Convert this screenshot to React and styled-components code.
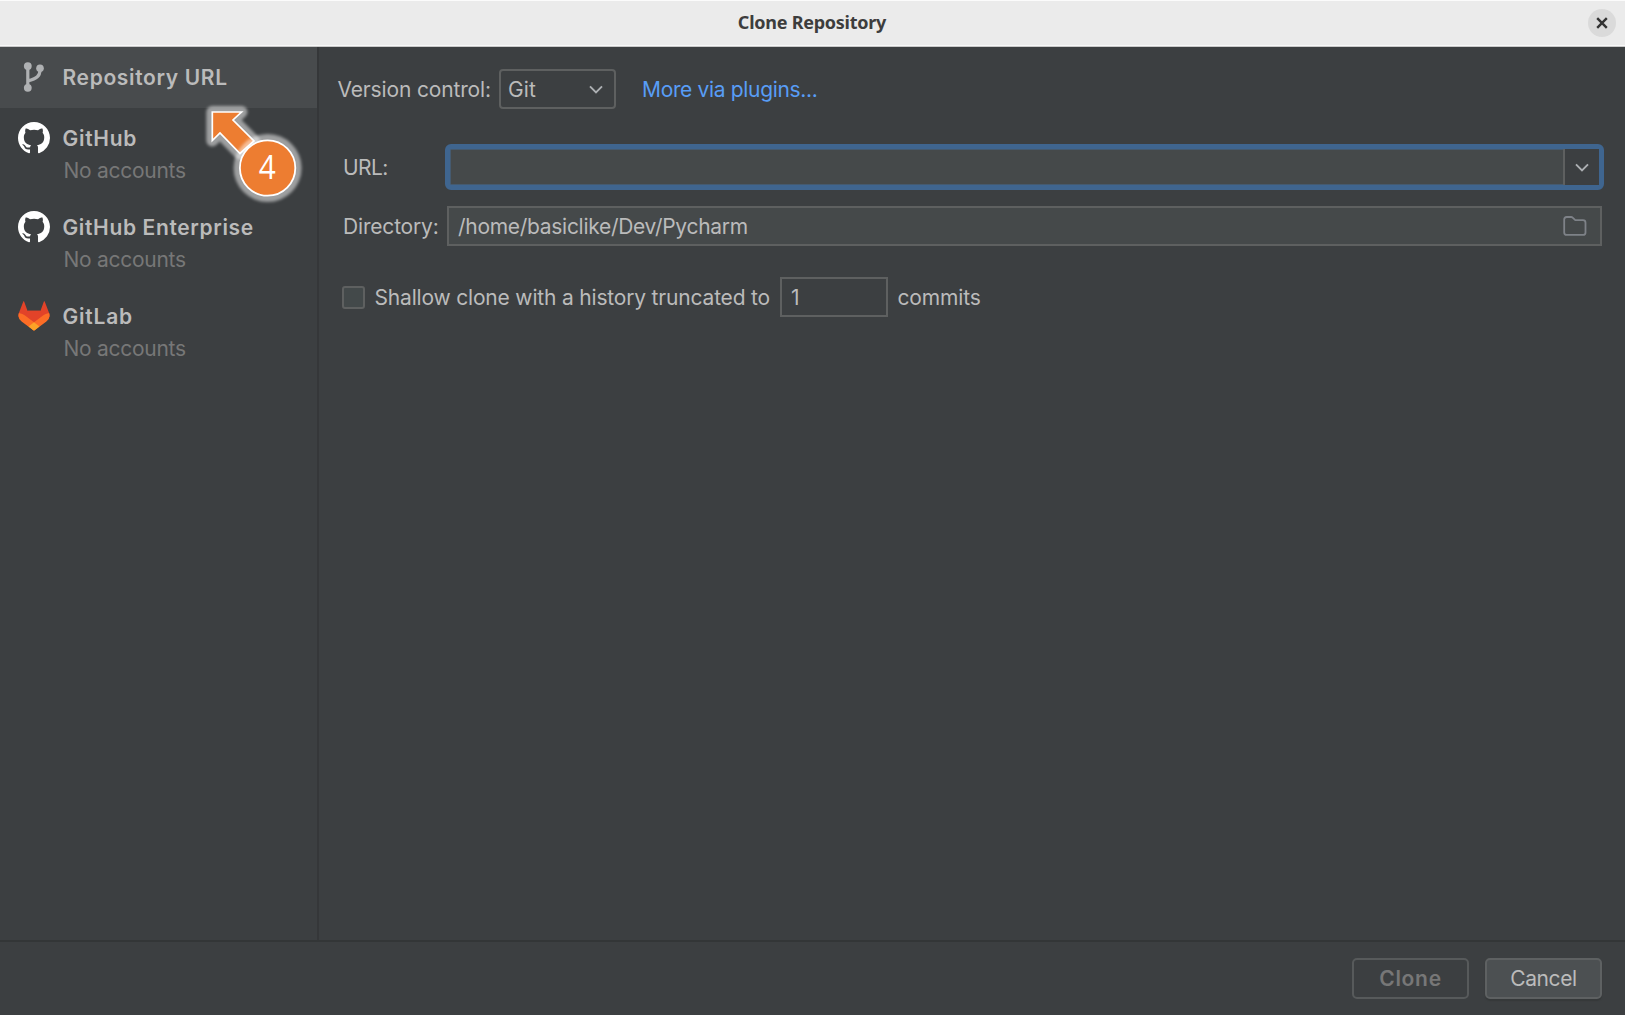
import React from "react";
import styled, { createGlobalStyle } from "styled-components";

const Global = createGlobalStyle`
  * { box-sizing: border-box; }
  body { margin: 0; background: #3c3f41; overflow: hidden; }
`;

const Dialog = styled.div`
  position: relative;
  width: 1625px;
  height: 1015px;
  display: flex;
  flex-direction: column;
  background: #3c3f41;
  color: #bbbbbb;
  font-family: Inter, "Liberation Sans", sans-serif;
  font-size: 21px;
  line-height: 26px;
`;

const TitleBar = styled.header`
  height: 47px;
  flex: none;
  display: grid;
  grid-template-columns: 1fr auto 1fr;
  align-items: center;
  padding: 0 9px;
  background: #ebebeb;
  border-top: 1px solid #fbfbfb;
  border-bottom: 1px solid #c9c9c9;
  box-shadow: inset 0 -1px 0 #f8f8f8;
`;

const Title = styled.h1`
  grid-column: 2;
  margin: 0;
  padding: 0 1px 3px 0;
  font: 700 18px/24px "Noto Sans", "Open Sans", sans-serif;
  letter-spacing: ${(p) => p.$ls}px;
  color: #3d3d3d;
`;

const CloseButton = styled.button`
  justify-self: end;
  width: 28px;
  height: 28px;
  margin-bottom: 1px;
  padding: 0;
  border: 0;
  border-radius: 50%;
  background: #dadada;
  display: grid;
  place-items: center;
`;

const Body = styled.div`
  flex: 1;
  display: flex;
  min-height: 0;
`;

const Sidebar = styled.nav`
  width: 319px;
  flex: none;
  border-right: 2px solid #353739;
`;

const Provider = styled.div`
  display: grid;
  grid-template-columns: 31px 1fr;
  column-gap: 13.5px;
  align-content: start;
  height: ${(p) => (p.$selected ? 61 : 89)}px;
  padding: 14px 0 0 18px;
  background: ${(p) => (p.$selected ? "#484b4d" : "transparent")};
`;

const IconSlot = styled.span`
  height: 34px;
  margin-top: -1px;
  display: grid;
  place-items: center;
`;

const ProviderName = styled.span`
  padding-top: 4px;
  font-weight: 600;
  letter-spacing: ${(p) => p.$ls}px;
  white-space: nowrap;
`;

const Accounts = styled.span`
  grid-column: 2;
  padding: 3px 0 0 1px;
  color: #777777;
  letter-spacing: ${(p) => p.$ls}px;
`;

const Text = styled.span`
  padding-top: 2px;
  letter-spacing: ${(p) => p.$ls || 0}px;
  white-space: nowrap;
`;

const Content = styled.main`
  flex: 1;
  display: flex;
  flex-direction: column;
  padding: 22px 23px 0 18px;
`;

const VersionRow = styled.div`
  height: 40px;
  display: flex;
  align-items: center;
`;

const VersionLabel = styled(Text)`
  width: 162px;
  padding-left: 0.5px;
`;

const Combo = styled.div`
  width: 117px;
  height: 40px;
  display: flex;
  align-items: center;
  justify-content: space-between;
  padding: 0 11px 0 7px;
  border: 2px solid #5e6060;
  border-radius: 4px;
`;

const Link = styled.a`
  margin-left: 26px;
  padding-top: 2px;
  color: #589df6;
  letter-spacing: ${(p) => p.$ls}px;
`;

const Form = styled.div`
  display: grid;
  grid-template-columns: 102px 1fr;
  grid-template-rows: 46px 40px;
  row-gap: 16px;
  margin: 35px -2px 0 6px;
  align-items: center;
`;

const UrlField = styled.div`
  height: 46px;
  display: flex;
  background: #45494a;
  border: 5px solid #3f658f;
  border-radius: 6px;
  box-shadow: inset 0 0 0 0.5px #466d94;
`;

const UrlInput = styled.input`
  flex: 1;
  min-width: 0;
  padding: 0 9px;
  border: 0;
  outline: 0;
  color: inherit;
  font: inherit;
  background: transparent;
`;

const DropButton = styled.button`
  width: 36px;
  padding: 0;
  border: 0;
  border-left: 2px solid #5e6060;
  background: #3c3f41;
  display: grid;
  place-items: center;
`;

const PathField = styled.div`
  height: 40px;
  margin: 0 2px;
  display: flex;
  align-items: center;
  justify-content: space-between;
  padding: 0 13px 0 9px;
  border: 2px solid #5e6060;
  background: #45494a;
`;

const ShallowRow = styled.label`
  display: flex;
  align-items: center;
  height: 40px;
  margin: 31px 0 0 5px;
`;

const Check = styled.span`
  width: 23px;
  height: 23px;
  margin: 1px 9.5px 0 0;
  border: 2px solid #5e6060;
  border-radius: 3px;
  background: #43494a;
`;

const ShallowText = styled(Text)`
  width: 405.5px;
`;

const Depth = styled.span`
  width: 108px;
  height: 40px;
  margin-right: 9.5px;
  padding: 6px 9px;
  border: 2px solid #5e6060;
`;

const Footer = styled.footer`
  height: 75px;
  flex: none;
  display: flex;
  justify-content: flex-end;
  gap: 16px;
  padding: 16px 23px 0;
  border-top: 2px solid #333637;
`;

const Button = styled.button`
  width: 117px;
  height: 41px;
  padding: 0;
  border: 2px solid ${(p) => (p.$muted ? "#575a5b" : "#5e6162")};
  border-radius: 5px;
  background: ${(p) => (p.$muted ? "transparent" : "#4c5052")};
  box-shadow: ${(p) => (p.$muted ? "none" : "0 2px 1px #36393a")};
  color: ${(p) => (p.$muted ? "#777777" : "#bbbbbb")};
  font: inherit;
  font-weight: ${(p) => (p.$muted ? 600 : 400)};
  letter-spacing: ${(p) => p.$ls}px;
`;

const Callout = styled.svg`
  position: absolute;
  left: 195px;
  top: 95px;
`;

const Chevron = () => (
  <svg width="14" height="9" viewBox="0 0 14 9" fill="none" stroke="#adb0b3" strokeWidth="1.9">
    <path d="M1 1.3 7 7.4 13 1.3" />
  </svg>
);

const BranchIcon = () => (
  <svg width="31" height="32" viewBox="0 0 31 32" fill="none" stroke="#afb1b3" strokeWidth="3.2">
    <path d="M9.8 6V26M22 9C22 15 19 17.5 9.8 20" />
    <g fill="#afb1b3" stroke="none">
      <circle cx="9.8" cy="5.1" r="3.9" />
      <circle cx="9.8" cy="26.8" r="3.9" />
      <circle cx="22" cy="7.3" r="3.8" />
    </g>
  </svg>
);

const GitHubIcon = () => (
  <svg width="32" height="32" viewBox="0 0 16 16" fill="#ffffff">
    <path d="M8 0C3.58 0 0 3.58 0 8c0 3.54 2.29 6.53 5.47 7.59.4.07.55-.17.55-.38 0-.19-.01-.82-.01-1.49-2.01.37-2.53-.49-2.69-.94-.09-.23-.48-.94-.82-1.13-.28-.15-.68-.52-.01-.53.63-.01 1.08.58 1.23.82.72 1.21 1.87.87 2.33.66.07-.52.28-.87.51-1.07-1.78-.2-3.64-.89-3.64-3.95 0-.87.31-1.59.82-2.15-.08-.2-.36-1.02.08-2.12 0 0 .67-.21 2.2.82.64-.18 1.32-.27 2-.27s1.36.09 2 .27c1.53-1.04 2.2-.82 2.2-.82.44 1.1.16 1.92.08 2.12.51.56.82 1.27.82 2.15 0 3.07-1.87 3.75-3.65 3.95.29.25.54.73.54 1.48 0 1.07-.01 1.93-.01 2.2 0 .21.15.46.55.38A8.01 8.01 0 0 0 16 8c0-4.42-3.58-8-8-8z" />
  </svg>
);

const GitLabIcon = () => (
  <svg width="32" height="30" viewBox="0 0 32 30">
    <path fill="#e24329" d="M6.2.7C6 .1 5.5.1 5.2.7L.9 12Q.3 14 .5 16L16 29.5 31.5 16Q31.7 14 31.1 12L26.8.7C26.5.1 26 .1 25.8.7L22.5 9.8H9.5Z" />
    <path fill="#fc6d26" d="M.9 12Q4.5 12.6 7.5 14.8L24.5 14.8Q27.5 12.6 31.1 12 32.8 17 28.4 20.4L16 29.7 3.6 20.4Q-.8 17 .9 12Z" />
    <path fill="#e24329" d="M7.3 14.7 16 21.3 24.7 14.7 22 9.8H10Z" />
    <path fill="#fca326" d="M16 21.3 21.4 25.6 17 29.1Q16 29.9 15 29.1L10.6 25.6Z" />
  </svg>
);

const FolderIcon = () => (
  <svg width="24" height="20" viewBox="0 0 24 20" fill="none" stroke="#7e8288" strokeWidth="1.8">
    <path d="M1.2 3.5Q1.2 1 3.7 1H8.2Q9 1 9.6 1.6L12.3 4.2H20Q22.5 4.2 22.5 6.7V16.4Q22.5 18.9 20 18.9H3.7Q1.2 18.9 1.2 16.4Z" />
  </svg>
);

const providers = [
  { name: "Repository URL", ls: 0.65, icon: <BranchIcon />, selected: true },
  { name: "GitHub", ls: 0.7, icon: <GitHubIcon /> },
  { name: "GitHub Enterprise", ls: 0.64, icon: <GitHubIcon /> },
  { name: "GitLab", ls: 0.8, icon: <GitLabIcon /> },
];

const ARROW = "17.3,17 46.5,17 38,25 59,46 45,58.5 25,38 17.3,45.5";

const StepCallout = () => (
  <Callout width="110" height="110" viewBox="0 0 110 110">
    <defs>
      <filter id="soft" x="-30%" y="-30%" width="160%" height="160%">
        <feGaussianBlur stdDeviation="1.7" />
      </filter>
    </defs>
    <polygon points={ARROW} fill="#fff" stroke="#fff" strokeWidth="12" strokeLinejoin="round" opacity="0.5" filter="url(#soft)" />
    <polygon points={ARROW} fill="#ed7d31" stroke="#fff" strokeWidth="1.7" />
    <circle cx="72.6" cy="73" r="34" fill="#fff" opacity="0.5" filter="url(#soft)" />
    <circle cx="72.6" cy="73" r="27.7" fill="#ed7d31" stroke="#fff" strokeWidth="1.8" />
    <text x="72.3" y="84.3" textAnchor="middle" fill="#fff" fontFamily="'Open Sans', sans-serif" fontSize="32" textLength="17" lengthAdjust="spacingAndGlyphs">4</text>
  </Callout>
);

export default function App() {
  return (
    <Dialog>
      <Global />
      <TitleBar>
        <Title $ls={-0.25}>Clone Repository</Title>
        <CloseButton aria-label="Close">
          <svg width="12" height="12" viewBox="0 0 12 12" stroke="#333" strokeWidth="2.4">
            <path d="M1.2 1.2 10.8 10.8M10.8 1.2 1.2 10.8" />
          </svg>
        </CloseButton>
      </TitleBar>
      <Body>
        <Sidebar>
          {providers.map((p) => (
            <Provider key={p.name} $selected={p.selected}>
              <IconSlot>{p.icon}</IconSlot>
              <ProviderName $ls={p.ls}>{p.name}</ProviderName>
              {!p.selected && <Accounts $ls={-0.27}>No accounts</Accounts>}
            </Provider>
          ))}
        </Sidebar>
        <Content>
          <VersionRow>
            <VersionLabel $ls={-0.15}>Version control:</VersionLabel>
            <Combo>
              <Text $ls={0.1}>Git</Text>
              <Chevron />
            </Combo>
            <Link $ls={-0.34}>More via plugins...</Link>
          </VersionRow>
          <Form>
            <Text $ls={-0.6}>URL:</Text>
            <UrlField>
              <UrlInput />
              <DropButton aria-label="History">
                <Chevron />
              </DropButton>
            </UrlField>
            <Text $ls={-0.18}>Directory:</Text>
            <PathField>
              <Text $ls={-0.29}>/home/basiclike/Dev/Pycharm</Text>
              <FolderIcon />
            </PathField>
          </Form>
          <ShallowRow>
            <Check />
            <ShallowText $ls={-0.18}>Shallow clone with a history truncated to</ShallowText>
            <Depth>1</Depth>
            <Text $ls={-0.13}>commits</Text>
          </ShallowRow>
        </Content>
      </Body>
      <Footer>
        <Button $muted $ls={0.7}>Clone</Button>
        <Button $ls={-0.4}>Cancel</Button>
      </Footer>
      <StepCallout />
    </Dialog>
  );
}
